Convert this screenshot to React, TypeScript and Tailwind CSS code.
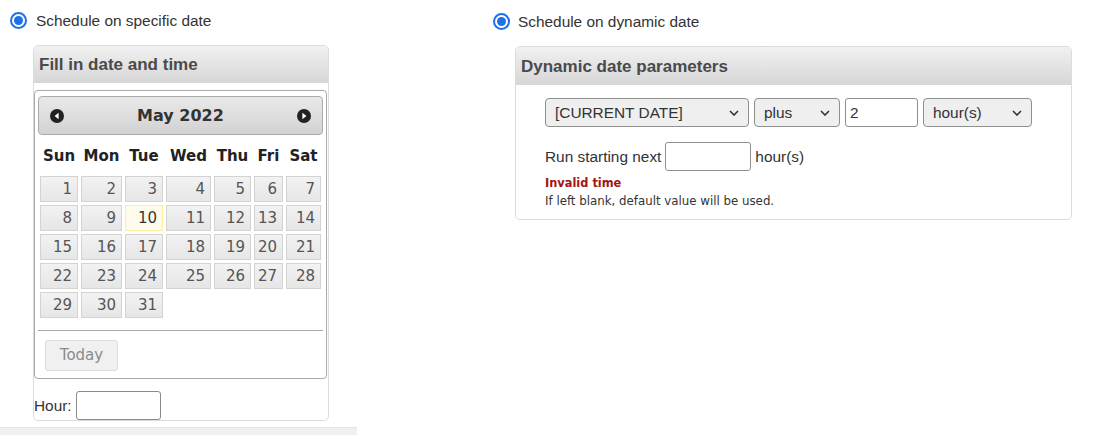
import React from "react";

const cols = "grid grid-cols-[38px_41px_38px_45px_37px_29px_35px] gap-[3px]";
const dayNames = ["Sun", "Mon", "Tue", "Wed", "Thu", "Fri", "Sat"];
const days = Array.from({ length: 31 }, (_, i) => i + 1);

const Radio = () => (
  <span className="w-[17px] h-[17px] rounded-full border-2 border-[#1a73e8] flex items-center justify-center shrink-0">
    <span className="w-[9px] h-[9px] rounded-full bg-[#1a73e8]" />
  </span>
);

const Chevron = () => (
  <svg width="10" height="6" viewBox="0 0 10 6" className="shrink-0">
    <path d="M1 1l4 4 4-4" fill="none" stroke="#333" strokeWidth="1.6" />
  </svg>
);

const Select = ({ label, width }: { label: string; width: string }) => (
  <div
    className={`${width} h-[29px] border border-[#8f8f8f] rounded-[4px] bg-[#efeff0] flex items-center justify-between pl-[9px] pr-[9px] text-[15.4px] text-[#333]`}
  >
    <span>{label}</span>
    <Chevron />
  </div>
);

const NavIcon = ({ dir }: { dir: "prev" | "next" }) => (
  <svg width="14" height="14" viewBox="0 0 14 14">
    <circle cx="7" cy="7" r="7" fill="#222" />
    {dir === "prev" ? (
      <path d="M8.6 3.8v6.4L4.6 7z" fill="#fff" />
    ) : (
      <path d="M5.4 3.8v6.4L9.4 7z" fill="#fff" />
    )}
  </svg>
);

const PanelHeader = ({ title, h }: { title: string; h: string }) => (
  <div
    className={`${h} rounded-t-[4px] bg-linear-to-b from-[#f1f1f1] to-[#d6d6d6] flex items-center pl-[5px] text-[17px] font-bold text-[#4a4a4a]`}
  >
    {title}
  </div>
);

const Datepicker = () => (
  <div className="w-[293px] mt-[7px] border border-[#aaa] rounded-[4px] pt-[5px] px-[3px] pb-[3px] font-['DejaVu_Sans',Verdana,sans-serif] shadow-[0_0_1px_rgba(0,0,0,0.15)]">
    <div className="relative h-[39px] border border-[#aaa] rounded-[4px] bg-linear-to-b from-[#e9e9e9] to-[#d2d2d2] flex items-center justify-center">
      <span className="absolute left-[11px] top-[12px] flex">
        <NavIcon dir="prev" />
      </span>
      <span className="text-[16px] font-bold text-[#333]">May 2022</span>
      <span className="absolute right-[11px] top-[12px] flex">
        <NavIcon dir="next" />
      </span>
    </div>
    <div className={`${cols} ml-[2px] h-[41px] items-center pt-[2px]`}>
      {dayNames.map((d) => (
        <span key={d} className="text-center text-[15px] font-bold text-[#222]">
          {d}
        </span>
      ))}
    </div>
    <div className={`${cols} ml-[2px]`}>
      {days.map((d) =>
        d === 10 ? (
          <span
            key={d}
            className="h-[26px] border border-[#fcefa1] bg-[#fffbea] text-right pr-[5px] text-[15px] leading-[25px] text-[#363636]"
          >
            {d}
          </span>
        ) : (
          <span
            key={d}
            className="h-[26px] border border-[#d3d3d3] bg-linear-to-b from-[#f2f2f2] to-[#e6e6e6] text-right pr-[5px] text-[15px] leading-[25px] text-[#555]"
          >
            {d}
          </span>
        )
      )}
    </div>
    <div className="mt-[12px] h-px bg-[#a8a8a8]" />
    <div className="pt-[9px] pl-[7px] pb-[4px]">
      <div className="w-[73px] h-[31px] border border-[#dcdcdc] rounded-[3px] bg-[#f0f0f0] flex items-center justify-center text-[15px] text-[#8a8a8a]">
        Today
      </div>
    </div>
  </div>
);

export default function App() {
  return (
    <div className="w-[1106px] h-[447px] bg-white flex font-['Liberation_Sans',Arial,sans-serif] text-[#333] overflow-hidden">
      <div className="w-[357px] shrink-0">
        <div className="h-[17px] mt-[12px] pl-[10px] flex items-center gap-[9px] text-[15.4px]">
          <Radio />
          <span>Schedule on specific date</span>
        </div>
        <div className="ml-[33px] mt-[16px] w-[296px] border border-[#dcdcdc] rounded-[5px]">
          <PanelHeader title="Fill in date and time" h="h-[37px]" />
          <Datepicker />
          <div className="mt-[12px] flex items-center gap-[4px] text-[15.4px]">
            <span>Hour:</span>
            <div className="w-[85px] h-[29px] border border-[#8a8a8a] rounded-[3px] bg-white" />
          </div>
        </div>
        <div className="mt-[6px] h-[8px] w-[357px] bg-[#f0f0f0] border-t border-[#e3e3e3]" />
      </div>

      <div className="pl-[136px]">
        <div className="h-[17px] mt-[13px] flex items-center gap-[8px] text-[15.4px]">
          <Radio />
          <span>Schedule on dynamic date</span>
        </div>
        <div className="ml-[22px] mt-[16px] w-[557px] border border-[#dcdcdc] rounded-[5px]">
          <PanelHeader title="Dynamic date parameters" h="h-[38px] pt-[2px]" />
          <div className="pl-[29px] pt-[13px] pb-[11px]">
            <div className="flex items-center gap-[5px]">
              <Select label="[CURRENT DATE]" width="w-[204px]" />
              <Select label="plus" width="w-[86px]" />
              <div className="w-[73px] h-[29px] border border-[#8f8f8f] rounded-[3px] bg-white flex items-center pl-[4px] text-[15.4px]">
                2
              </div>
              <Select label="hour(s)" width="w-[109px]" />
            </div>
            <div className="mt-[15px] flex items-center gap-[4px] text-[15.4px]">
              <span>Run starting next</span>
              <div className="w-[86px] h-[29px] border border-[#8f8f8f] rounded-[3px] bg-white" />
              <span>hour(s)</span>
            </div>
            <div className="mt-[5px] leading-[14px] text-[11.4px] font-bold text-[#a31515] font-['DejaVu_Sans',Verdana,sans-serif]">
              Invalid time
            </div>
            <div className="mt-[5px] leading-[13px] text-[11.8px] text-[#333] font-['DejaVu_Sans',Verdana,sans-serif]">
              If left blank, default value will be used.
            </div>
          </div>
        </div>
      </div>
    </div>
  );
}
